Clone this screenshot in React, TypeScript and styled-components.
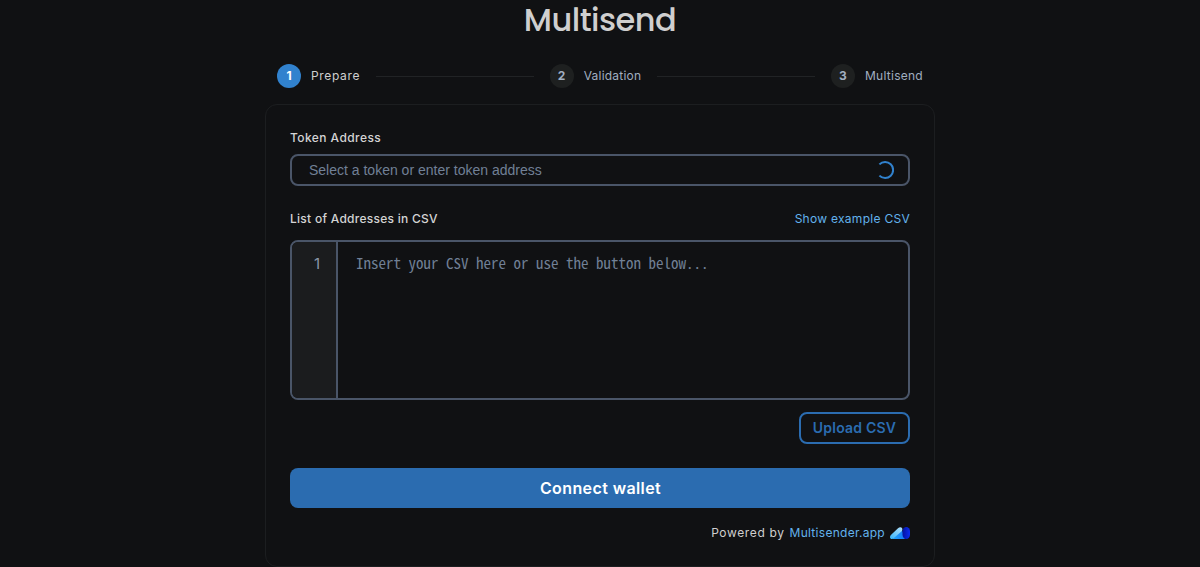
import React from "react";
import styled, { createGlobalStyle } from "styled-components";

const GlobalStyle = createGlobalStyle`
  * { box-sizing: border-box; }
  html { background: #101113; overflow: hidden; }
  body {
    margin: 0;
    background: #101113;
    color: #cfcfcf;
    font-family: Inter, sans-serif;
    font-size: 12px;
  }
`;

const Page = styled.main`
  width: 670px;
  margin: 0 auto;
`;

const Title = styled.h1`
  margin: 0;
  height: 64px;
  line-height: 40px;
  text-align: center;
  font-family: Poppins, Inter, sans-serif;
  font-size: 32px;
  font-weight: 500;
  letter-spacing: -0.5px;
  color: #cfcfcf;
`;

const Stepper = styled.div`
  display: flex;
  align-items: center;
  gap: 16px;
  height: 24px;
  padding: 0 12px;
`;

const Step = styled.div<{ $active?: boolean; $tracking: number }>`
  display: flex;
  align-items: center;
  gap: 10px;
  letter-spacing: ${(p) => p.$tracking}px;
  line-height: 24px;
  color: ${(p) => (p.$active ? "#cfcfcf" : "#a0aec0")};
`;

const StepNumber = styled.span<{ $active?: boolean }>`
  width: 24px;
  height: 24px;
  border-radius: 50%;
  line-height: 24px;
  text-align: center;
  font-size: 12px;
  font-weight: 700;
  letter-spacing: 0;
  background: ${(p) => (p.$active ? "#3182ce" : "#1e2020")};
  color: ${(p) => (p.$active ? "#ffffff" : "#a0aec0")};
`;

const StepLine = styled.div`
  flex: 1;
  height: 1px;
  margin-top: 1px;
  background: #212325;
`;

const Card = styled.section`
  margin-top: 16px;
  height: 463px;
  border: 1px solid #1c1e20;
  border-radius: 12px;
  padding: 24px;
`;

const LabelRow = styled.div`
  display: flex;
  justify-content: space-between;
  height: 18px;
  line-height: 18px;
`;

const Label = styled.label<{ $tracking: number }>`
  font-weight: 500;
  letter-spacing: ${(p) => p.$tracking}px;
  color: #d4d4d4;
`;

const Link = styled.a`
  font-weight: 400;
  letter-spacing: 0.28px;
  color: #63b3ed;
`;

const TokenField = styled.div`
  display: flex;
  align-items: center;
  justify-content: space-between;
  height: 32px;
  margin: 7px 0 24px;
  padding: 0 14px 0 17px;
  border: 2px solid #4a5568;
  border-radius: 8px;
  font-family: "Liberation Sans", sans-serif;
  font-size: 14px;
  color: #718096;
`;

const Editor = styled.div`
  display: flex;
  height: 160px;
  margin: 12px 0;
  border: 2px solid #4a5568;
  border-radius: 8px;
  overflow: hidden;
  line-height: 24px;
`;

const Gutter = styled.div`
  width: 46px;
  padding: 10px 16px 0 0;
  border-right: 2px solid #4a5568;
  background: #1b1c1e;
  text-align: right;
  font-size: 15px;
  color: #8a96a8;
`;

const Placeholder = styled.div`
  padding: 9px 18px;
  font-family: "Noto Sans Mono CJK JP", "Liberation Mono", monospace;
  font-size: 15px;
  color: #718096;
`;

const UploadButton = styled.button`
  display: block;
  width: 111px;
  height: 32px;
  margin: 0 0 24px auto;
  padding: 0 0 1px;
  border: 2px solid #2b6cb0;
  border-radius: 8px;
  background: transparent;
  font: 600 14px Inter, sans-serif;
  letter-spacing: 0.2px;
  color: #2b6cb0;
`;

const ConnectButton = styled.button`
  display: block;
  width: 100%;
  height: 40px;
  padding: 0 0 0 1px;
  border: 0;
  border-radius: 8px;
  background: #2b6cb0;
  font: 600 16px Inter, sans-serif;
  letter-spacing: 0.4px;
  color: #ffffff;
`;

const Footer = styled.footer`
  display: flex;
  justify-content: flex-end;
  align-items: center;
  gap: 5px;
  height: 18px;
  line-height: 18px;
  margin-top: 16px;
`;

const PoweredBy = styled.span`
  letter-spacing: 0.63px;
`;

const Spinner = () => (
  <svg width="18" height="18" viewBox="0 0 18 18" fill="none">
    <path d="M3.400 3.400A8 8 0 1 1 3.400 14.600" stroke="#3182ce" strokeWidth="2" />
  </svg>
);

const Logo = () => (
  <svg width="20" height="12" viewBox="0 0 20 12">
    <defs>
      <linearGradient id="wing" x1="0" y1="1" x2="1" y2="0">
        <stop offset="0" stopColor="#35b4fb" />
        <stop offset="1" stopColor="#b5e2fb" />
      </linearGradient>
      <linearGradient id="base" x1="0" y1="0" x2="1" y2="0">
        <stop offset="0" stopColor="#26a9fb" />
        <stop offset="1" stopColor="#1479f8" />
      </linearGradient>
      <linearGradient id="oval" x1="0" y1="0" x2="1" y2="0">
        <stop offset="0" stopColor="#0512a0" />
        <stop offset="1" stopColor="#0a2cf0" />
      </linearGradient>
    </defs>
    <path d="M2 12 12 3l3 9Z" fill="url(#base)" />
    <path d="M8 1.200C10-.7 12.500.2 12.400 2.400c0 .8-.4 1.500-1 2L3.600 11.300C2 12.600 0 12 0 10.200c0-.9.300-1.500.9-2.100Z" fill="url(#wing)" />
    <rect x="12.500" width="7.500" height="12" rx="3.750" ry="4.500" fill="url(#oval)" />
  </svg>
);

export default function App() {
  return (
    <>
      <GlobalStyle />
      <Page>
        <Title>Multisend</Title>
        <Stepper>
          <Step $active $tracking={0.65}>
            <StepNumber $active>1</StepNumber>
            Prepare
          </Step>
          <StepLine />
          <Step $tracking={0.23}>
            <StepNumber>2</StepNumber>
            Validation
          </Step>
          <StepLine />
          <Step $tracking={0.27}>
            <StepNumber>3</StepNumber>
            Multisend
          </Step>
        </Stepper>
        <Card>
          <LabelRow>
            <Label $tracking={0.42}>Token Address</Label>
          </LabelRow>
          <TokenField>
            <span>Select a token or enter token address</span>
            <Spinner />
          </TokenField>
          <LabelRow>
            <Label $tracking={0.27}>List of Addresses in CSV</Label>
            <Link>Show example CSV</Link>
          </LabelRow>
          <Editor>
            <Gutter>1</Gutter>
            <Placeholder>Insert your CSV here or use the button below...</Placeholder>
          </Editor>
          <UploadButton>Upload CSV</UploadButton>
          <ConnectButton>Connect wallet</ConnectButton>
          <Footer>
            <PoweredBy>Powered by</PoweredBy>
            <Link>Multisender.app</Link>
            <Logo />
          </Footer>
        </Card>
      </Page>
    </>
  );
}
